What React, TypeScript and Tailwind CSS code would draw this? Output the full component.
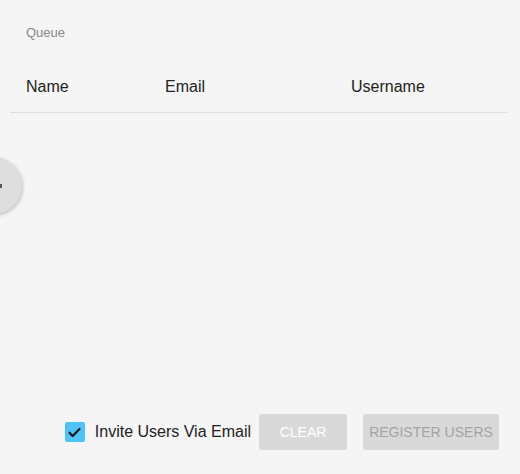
import React from 'react'

export default function App() {
  return (
    <div
      className="relative w-[520px] h-[474px] bg-[#f5f5f5] overflow-hidden flex flex-col"
      style={{ fontFamily: '"Liberation Sans", Arial, sans-serif' }}
    >
      <div className="pt-[25px] pl-[26px] text-[13px] leading-[16px] text-[#888888]">Queue</div>

      <div className="mt-[27px] ml-[10px] w-[497px] border-b border-[#dddddd]">
        <div className="flex h-[44px] items-start pt-[9px] text-[16px] leading-[20px] text-[#222222]">
          <div className="w-[155px] pl-[16px]">Name</div>
          <div className="w-[186px]">Email</div>
          <div>Username</div>
        </div>
      </div>

      {/* side toggle */}
      <button className="absolute left-[-34px] top-[158px] w-[56px] h-[56px] rounded-full bg-[#dedede] shadow-[0_1px_4px_rgba(0,0,0,0.3)] flex items-center justify-end pr-[20px]">
        <span className="block w-[2px] h-[4px] bg-[#555555]" />
      </button>

      <div className="mt-auto mb-[24px] flex items-center justify-end pr-[21px]">
        <label className="flex items-center mr-[8px]">
          <span className="w-[20px] h-[20px] rounded-[2px] bg-[#4fc3f7] flex items-center justify-center">
            <svg width="15" height="15" viewBox="0 0 24 24" fill="none">
              <path d="M4 12.5l5 5L20 6.5" stroke="#1a1a1a" strokeWidth="3.6" strokeLinecap="round" strokeLinejoin="round" />
            </svg>
          </span>
          <span className="ml-[10px] text-[16px] leading-[20px] text-[#222222]">Invite Users Via Email</span>
        </label>
        <button className="w-[88px] h-[36px] rounded-[2px] bg-[#d9d9d9] text-white text-[14px] uppercase">
          Clear
        </button>
        <button className="ml-[16px] w-[136px] h-[36px] rounded-[2px] bg-[#d9d9d9] text-[#a3a3a3] text-[14px] uppercase">
          Register Users
        </button>
      </div>
    </div>
  )
}
